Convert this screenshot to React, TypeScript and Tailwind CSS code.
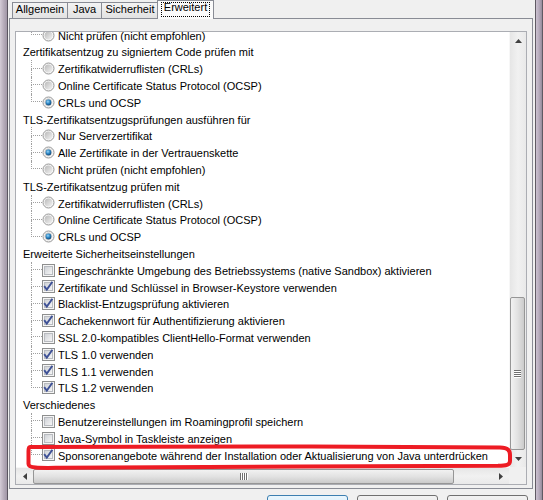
import React from 'react';

type Option = { label: string; kind: 'radio' | 'check'; on?: boolean };
type Group = { title?: string; items: Option[] };

const revocationSources: Option[] = [
  { label: 'Zertifikatwiderruflisten (CRLs)', kind: 'radio' },
  { label: 'Online Certificate Status Protocol (OCSP)', kind: 'radio' },
  { label: 'CRLs und OCSP', kind: 'radio', on: true },
];

const groups: Group[] = [
  // header of this group is scrolled out of view
  { items: [{ label: 'Nicht prüfen (nicht empfohlen)', kind: 'radio' }] },
  { title: 'Zertifikatsentzug zu signiertem Code prüfen mit', items: revocationSources },
  {
    title: 'TLS-Zertifikatsentzugsprüfungen ausführen für',
    items: [
      { label: 'Nur Serverzertifikat', kind: 'radio' },
      { label: 'Alle Zertifikate in der Vertrauenskette', kind: 'radio', on: true },
      { label: 'Nicht prüfen (nicht empfohlen)', kind: 'radio' },
    ],
  },
  { title: 'TLS-Zertifikatsentzug prüfen mit', items: revocationSources },
  {
    title: 'Erweiterte Sicherheitseinstellungen',
    items: [
      { label: 'Eingeschränkte Umgebung des Betriebssystems (native Sandbox) aktivieren', kind: 'check' },
      { label: 'Zertifikate und Schlüssel in Browser-Keystore verwenden', kind: 'check', on: true },
      { label: 'Blacklist-Entzugsprüfung aktivieren', kind: 'check', on: true },
      { label: 'Cachekennwort für Authentifizierung aktivieren', kind: 'check', on: true },
      { label: 'SSL 2.0-kompatibles ClientHello-Format verwenden', kind: 'check' },
      { label: 'TLS 1.0 verwenden', kind: 'check', on: true },
      { label: 'TLS 1.1 verwenden', kind: 'check', on: true },
      { label: 'TLS 1.2 verwenden', kind: 'check', on: true },
    ],
  },
  {
    title: 'Verschiedenes',
    items: [
      { label: 'Benutzereinstellungen im Roamingprofil speichern', kind: 'check' },
      { label: 'Java-Symbol in Taskleiste anzeigen', kind: 'check' },
      {
        label: 'Sponsorenangebote während der Installation oder Aktualisierung von Java unterdrücken',
        kind: 'check',
        on: true,
      },
    ],
  },
];

const Radio: React.FC<{ on?: boolean }> = ({ on }) => (
  <svg width="13" height="13" viewBox="0 0 13 13">
    <defs>
      <linearGradient id="radio-inner" x1="0" y1="0" x2="1" y2="1">
        <stop offset="0" stopColor="#b9b9b9" />
        <stop offset="1" stopColor="#f3f3f3" />
      </linearGradient>
      <radialGradient id="radio-dot" cx="0.4" cy="0.35" r="0.7">
        <stop offset="0" stopColor="#9ad6f8" />
        <stop offset="0.5" stopColor="#2b86c5" />
        <stop offset="1" stopColor="#123f68" />
      </radialGradient>
    </defs>
    <circle cx="6.5" cy="6.5" r="5.5" fill="#f6f6f6" stroke="#979797" />
    <circle cx="6.5" cy="6.5" r="3.9" fill="url(#radio-inner)" />
    {on && <circle cx="6.5" cy="6.5" r="2.9" fill="url(#radio-dot)" />}
  </svg>
);

const Check: React.FC<{ on?: boolean }> = ({ on }) => (
  <svg width="13" height="13" viewBox="0 0 13 13">
    <defs>
      <linearGradient id="check-inner" x1="0" y1="0" x2="1" y2="1">
        <stop offset="0" stopColor="#cdd0d5" />
        <stop offset="1" stopColor="#f8f8f8" />
      </linearGradient>
    </defs>
    <rect x="0.5" y="0.5" width="12" height="12" fill="#f5f5f5" stroke="#8e8f8f" />
    <rect x="2.5" y="2.5" width="8" height="8" fill="url(#check-inner)" stroke="#b8bbc0" />
    {on && <path d="M2.2 6.2 L4.8 9.6 L10.4 1.8" fill="none" stroke="#3e5196" strokeWidth="1.9" />}
  </svg>
);

const Arrow: React.FC<{ dir: 'up' | 'down' | 'left' | 'right' }> = ({ dir }) => {
  const pts = {
    up: '0,4 3.5,0 7,4',
    down: '0,0 7,0 3.5,4',
    left: '4,0 4,7 0,3.5',
    right: '0,0 4,3.5 0,7',
  }[dir];
  const vertical = dir === 'up' || dir === 'down';
  return (
    <svg width={vertical ? 7 : 4} height={vertical ? 4 : 7} viewBox={vertical ? '0 0 7 4' : '0 0 4 7'}>
      <polygon points={pts} fill="#404040" />
    </svg>
  );
};

const Connector: React.FC<{ last: boolean }> = ({ last }) => (
  <div className="flex w-[11px] shrink-0 flex-col self-stretch">
    <div className="h-[8.4px] border-b border-l border-dotted border-[#a0a0a0]" />
    <div className={last ? 'flex-1' : 'flex-1 border-l border-dotted border-[#a0a0a0]'} />
  </div>
);

const OptionRow: React.FC<{ item: Option; last: boolean }> = ({ item, last }) => (
  <div className="flex h-[16.8px] items-center">
    <div className="w-[15px] shrink-0" />
    <Connector last={last} />
    <div className="flex h-[13px] w-[13px] shrink-0 items-center justify-center">
      {item.kind === 'radio' ? <Radio on={item.on} /> : <Check on={item.on} />}
    </div>
    <span className="ml-[3px] self-start whitespace-nowrap leading-[18.8px]">{item.label}</span>
  </div>
);

const SettingsTree: React.FC = () => (
  <div className="-mt-[5.4px] pr-2">
    {groups.map((g, gi) => (
      <div key={gi}>
        {g.title && (
          <div className="flex h-[16.8px] pl-[7px]">
            <span className="whitespace-nowrap leading-[18.8px]">{g.title}</span>
          </div>
        )}
        {g.items.map((item, i) => (
          <OptionRow key={i} item={item} last={i === g.items.length - 1} />
        ))}
      </div>
    ))}
  </div>
);

const Grip: React.FC<{ vertical: boolean }> = ({ vertical }) => (
  <div className={vertical ? 'flex flex-col gap-[1px]' : 'flex flex-row gap-[1px]'}>
    {[0, 1, 2, 3].map((i) => (
      <div
        key={i}
        className={
          vertical
            ? 'h-[1px] w-[7px] bg-[#6f6f6f] shadow-[0_1px_0_#ffffff]'
            : 'h-[7px] w-[1px] bg-[#6f6f6f] shadow-[1px_0_0_#ffffff]'
        }
      />
    ))}
  </div>
);

const VerticalScrollbar: React.FC = () => (
  <div className="flex flex-col border-l border-[#f7f7f7] bg-linear-to-r from-[#e6e6e6] via-[#f1f1f1] to-[#e9e9e9]">
    <div className="flex h-[17px] items-center justify-center">
      <Arrow dir="up" />
    </div>
    <div className="h-[248px]" />
    <div className="flex h-[153px] w-[15px] items-center justify-center rounded-[2px] border border-[#969696] bg-linear-to-r from-[#f2f2f2] via-[#e2e2e2] to-[#cbcbcb]">
      <Grip vertical />
    </div>
    <div className="flex-1" />
    <div className="flex h-[17px] items-center justify-center">
      <Arrow dir="down" />
    </div>
  </div>
);

const HorizontalScrollbar: React.FC = () => (
  <div className="flex border-t border-[#f7f7f7] bg-linear-to-b from-[#e6e6e6] via-[#f1f1f1] to-[#e9e9e9]">
    <div className="flex w-[17px] items-center justify-center">
      <Arrow dir="left" />
    </div>
    <div className="flex h-[15px] w-[421px] items-center justify-center self-center rounded-[2px] border border-[#969696] bg-linear-to-b from-[#f2f2f2] via-[#e2e2e2] to-[#cbcbcb]">
      <Grip vertical={false} />
    </div>
    <div className="flex-1" />
    <div className="flex w-[17px] items-center justify-center">
      <Arrow dir="right" />
    </div>
  </div>
);

const tabs = ['Allgemein', 'Java', 'Sicherheit'];
const tabWidths = ['w-[56px] border-l', 'w-[34px]', 'w-[57px]'];

const TabStrip: React.FC = () => (
  <div className="flex h-[18px] items-start pl-[4px]">
    {tabs.map((t, i) => (
      <div
        key={t}
        className={`mt-[2px] flex h-[16px] justify-center border-t border-r border-[#898c95] bg-linear-to-b from-[#f3f3f3] to-[#e2e2e2] leading-[12px] ${tabWidths[i]}`}
      >
        {t}
      </div>
    ))}
    <div className="relative z-10 -ml-[2px] flex h-[19px] w-[57px] justify-center border-x border-t border-[#898c95] bg-[#fbfbfb] pt-[1px]">
      <span className="block h-[15px] border border-dotted border-black px-[2px] leading-[9px]">Erweitert</span>
    </div>
  </div>
);

const HighlightMark: React.FC = () => (
  <svg className="pointer-events-none absolute left-0 top-0" width="543" height="500" viewBox="0 0 543 500">
    <path
      d="M30 447 C150 446 350 446 500 447.5 C508 448 510 450 510 455 L510 461 C510 465 506 465.5 498 465.8 L300 466.6 L60 467.8 C40 468 28.5 468.5 28.5 464 L28.5 451 C28.5 448 29 447 30 447 Z"
      fill="none"
      stroke="#ed1c24"
      strokeWidth="4"
      strokeLinejoin="round"
    />
  </svg>
);

const App: React.FC = () => (
  <div className="relative flex h-[500px] w-[543px] overflow-hidden bg-[#f0f0f0] font-['Liberation_Sans',Arial,sans-serif] text-[11px] text-black">
    {/* window frame, left */}
    <div className="w-[8px] shrink-0 border-r border-[#5a5560] bg-linear-to-r from-[#d4ccd7] via-[#b8aebc] to-[#a096a6]" />

    <div className="flex w-[527px] shrink-0 flex-col">
      <TabStrip />
      <div className="ml-[1px] mr-[2px] h-[474px] border border-[#898c95] bg-[#f0f0f0] px-[5px] pt-[12px] pb-[3px]">
        <div className="grid h-full grid-cols-[1fr_17px] grid-rows-[1fr_17px] border border-[#abadb3] bg-white">
          <div className="overflow-hidden">
            <SettingsTree />
          </div>
          <VerticalScrollbar />
          <HorizontalScrollbar />
          <div className="bg-[#f0f0f0]" />
        </div>
      </div>
      {/* dialog buttons, only their top edges are in view */}
      <div className="mt-[6px] flex justify-end gap-[9px] pr-[7px]">
        <div aria-label="OK" className="h-[23px] w-[81px] rounded-[3px] border border-[#3c7fb1] bg-linear-to-b from-[#eaf6fd] to-[#bee6fd]" />
        <div aria-label="Abbrechen" className="h-[23px] w-[81px] rounded-[3px] border border-[#707070] bg-linear-to-b from-[#f2f2f2] to-[#dddddd]" />
        <div aria-label="Übernehmen" className="h-[23px] w-[81px] rounded-[3px] border border-[#707070] bg-linear-to-b from-[#f2f2f2] to-[#dddddd]" />
      </div>
    </div>

    {/* window frame, right */}
    <div className="w-[8px] shrink-0 border-l border-r border-[#5f5a63] bg-linear-to-r from-[#cbc1d0] via-[#b6abbc] to-[#968c9c]" />

    <HighlightMark />
  </div>
);

export default App;
